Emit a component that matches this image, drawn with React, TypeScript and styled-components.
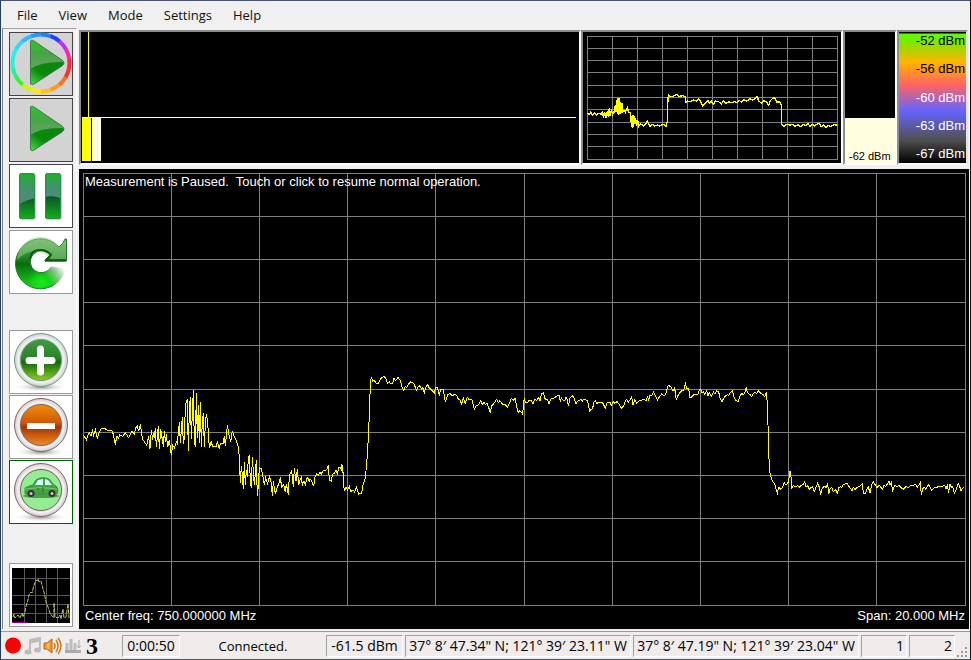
import React from "react";
import styled, { createGlobalStyle, css } from "styled-components";

const GlobalStyle = createGlobalStyle`
  * { box-sizing: border-box; }
  body {
    margin: 0;
    background: #f0f0f0;
    color: #000;
    font-family: "Open Sans", "Noto Sans", sans-serif;
    font-size: 13px;
  }
`;

const sunken = css`
  border: 2px solid;
  border-color: #8c8c8c #fff #fff #8c8c8c;
`;

const Window = styled.div`
  display: flex;
  flex-direction: column;
  height: 100vh;
  min-height: 660px;
  border: 1px solid #1f3d5c;
  border-top-color: #4a546e;
  border-right-color: #111;
  border-bottom-color: #4c5568;
  background: #f0f0f0;
`;

const MenuBar = styled.nav`
  display: flex;
  flex: none;
  height: 27px;
  padding-left: 6px;
`;

const MenuItem = styled.button`
  border: 0;
  padding: 0 11px 0 10px;
  background: none;
  font: inherit;
  color: #111;
`;

const Workspace = styled.div`
  display: flex;
  flex: 1;
  gap: 2px;
  min-height: 0;
  padding-left: 1px;
`;

const Sidebar = styled.aside`
  display: flex;
  flex: none;
  flex-direction: column;
  width: 75px;
  padding: 3px 0 0 6px;
  border-top: 1px solid #a0a0a0;
  border-left: 1px solid #808080;
  border-right: 1px solid #fff;
`;

const ToolGroup = styled.div<{ $gap: number; $top?: number }>`
  display: flex;
  flex-direction: column;
  gap: ${(p) => p.$gap}px;
  margin-top: ${(p) => p.$top ?? 0}px;
`;

const ToolButton = styled.button<{ $edge?: string; $active?: boolean }>`
  display: block;
  width: 64px;
  height: 64px;
  padding: 0;
  border: 1px solid ${(p) => p.$edge ?? "#999"};
  background: ${(p) => (p.$active ? "#d3d3d3" : "#fff")};
  svg { display: block; overflow: visible; }
`;

const Content = styled.main`
  display: flex;
  flex: 1;
  min-width: 0;
  flex-direction: column;
  gap: 4px;
  padding: 2px 1px 0 0;
`;

const Meters = styled.div`
  display: grid;
  flex: none;
  grid-template-columns: minmax(0, 1fr) 262px 54px 71px;
  grid-template-rows: 135px;
  padding-right: 1px;
`;

const Overview = styled.div`
  ${sunken}
  display: flex;
  flex-direction: column;
  padding: 0 3px 2px 1px;
  background: #000;
`;

const OverviewTop = styled.div`
  height: 85px;
  padding-left: 6px;
`;

const Needle = styled.div`
  width: 1px;
  height: 100%;
  background: #ff0;
`;

const OverviewBars = styled.div`
  display: flex;
  flex: 1;
  gap: 1px;
  border-top: 1px solid #ffffe8;
`;

const LevelBar = styled.div<{ $color: string }>`
  width: 9px;
  background: ${(p) => p.$color};
`;

const MiniPlot = styled.div`
  ${sunken}
  padding: 4px 3px 3px 4px;
  background: #000;
  svg { display: block; width: 100%; height: 124px; }
`;

const Meter = styled.div`
  ${sunken}
  display: flex;
  flex-direction: column;
  justify-content: flex-end;
  background: #000;
`;

const MeterFill = styled.div`
  display: flex;
  align-items: flex-end;
  height: 45px;
  padding-left: 4px;
  background: #ffffe0;
  font: 11px/14px "Liberation Sans", Arial, sans-serif;
  white-space: nowrap;
`;

const Scale = styled.div`
  ${sunken}
  display: flex;
  flex-direction: column;
  justify-content: space-between;
  padding-right: 1px;
  border-right-color: #e3e3e3;
  background: linear-gradient(#000 1px, #5f0 2px, #8ce000 12px, #ffb400 30px, #ff6464 53px, #6464ff 79px, #505050 108px, #000 131px);
  font: 13px/18px "Liberation Sans", Arial, sans-serif;
  text-align: right;
`;

const ScaleLabel = styled.span<{ $light: boolean }>`
  color: ${(p) => (p.$light ? "#fff" : "#000")};
`;

const Spectrum = styled.section`
  position: relative;
  display: flex;
  flex: 1;
  min-height: 0;
  flex-direction: column;
  padding: 4px 3px 2px 4px;
  background: #000;
  color: #fff;
  font: 13px/16px "Liberation Sans", Arial, sans-serif;
`;

const PlotArea = styled.div`
  flex: 1;
  min-height: 0;
  svg { display: block; width: 100%; height: 100%; }
`;

const Message = styled.p`
  position: absolute;
  top: 5px;
  left: 6px;
  margin: 0;
  white-space: pre;
`;

const PlotFooter = styled.div`
  display: flex;
  flex: none;
  justify-content: space-between;
  height: 21px;
  padding: 2px 1px 0 2px;
`;

const StatusBar = styled.footer`
  display: flex;
  flex: none;
  align-items: center;
  gap: 2px;
  height: 28px;
  margin-top: 2px;
  padding: 0 3px;
  border-top: 1px solid #999;
  background: #f0eceb;
  line-height: 20px;
  white-space: nowrap;
`;

const StatusIcons = styled.div`
  display: flex;
  flex: none;
  align-items: center;
  gap: 2px;
  width: 116px;
`;

const Channel = styled.strong`
  margin-left: 3px;
  font: bold 24px/24px "Liberation Serif", serif;
`;

const Cell = styled.span<{ $width: number; $align?: string }>`
  flex: none;
  width: ${(p) => p.$width}px;
  height: 22px;
  padding: 0 2px;
  border: 1px solid;
  border-color: #a0a0a0 #fff #fff #a0a0a0;
  font-size: 14px;
  text-align: ${(p) => p.$align ?? "center"};
`;

const Connection = styled.span`
  flex: 1;
  min-width: 70px;
  text-align: center;
`;

const Grip = styled.svg`
  flex: none;
  align-self: flex-end;
`;

type Section = { dx: number; dy: number; points: string };

const SWEEP: Section[] = [
  { dx: -9, dy: 591, points: "10,196 15,202 19,210 24,196 28,188 33,197 37,181 41,196 46,179 52,205 58,187 62,177 75,176 82,181 95,181 100,193 106,225 110,199 116,204 119,194 128,200 136,188 146,203 155,184 163,192 168,172 172,168 176,184 181,163 187,206 193,215 200,226 206,199 210,236 214,181 218,210 220,190 223,205 226,175 229,232 232,200 235,167 238,238 242,178 247,208 250,230 253,184 256,215 259,193 263,232 268,210 274,256 278,226 283,233 289,215 292,220 295,188 298,157 301,218 304,180 307,142 310,223 313,206 316,112 319,95 322,90 325,244 328,118 331,80 334,206 337,130 340,61 343,218 346,230 349,70 352,205 355,104 358,220 361,97 364,230 367,154 370,130 373,230 376,160 379,132 382,148 385,185 388,235 394,214 397,228 409,230 412,214 418,238 421,220 430,220 433,199 436,228 439,197 442,166 446,190 452,217 457,184 463,202 469,211 475,232 478,262 481,338 484,287 487,316 490,358 493,277 496,345 499,299 502,320 505,262 508,259 511,331 514,355 517,262 520,305 523,345 526,310 529,271 532,379 535,345 538,292 544,296 548,315 553,345 557,324 563,342 568,319 573,335 577,377 580,334 586,372 592,350 596,344 601,322 605,352 611,343 616,367 619,341 625,374 628,318 631,310 635,302 640,352 643,295 648,333 652,297 656,345 660,330 664,322 667,345 672,333 676,345 682,322 688,333" },
  { dx: 681, dy: 561, points: "0,358 5,362 11,379 15,350 20,340 25,347 30,336 34,342 38,333 46,332 52,325 55,314 58,360 64,363 68,342 74,340 78,329 82,342 87,322 91,325 94,318 96,333 98,316 101,377 104,394 108,382 112,390 118,380 122,394 130,391 134,397 139,382 146,402 155,400 160,370 165,358 168,332 172,285 176,215 179,135 181,70 184,50 188,64 192,60 198,69 205,70 213,55 222,48 227,55 233,70 238,65 242,71 248,70 252,55 257,62 264,53 270,60 276,80 281,91 286,80 290,82 295,73 302,66 312,71 319,91 325,80 330,77 335,87 338,82 343,99 348,80 352,73 358,84 364,90 373,99 376,84 382,82 388,104 393,87 399,88 403,105 406,126 413,104 420,100 427,107 434,103 440,106 445,118 450,120 455,132 460,114 466,130 472,112 477,118 486,120 493,149 498,138 505,135 512,121 516,133 522,128 526,133 531,130 536,142 541,158 545,137 552,130 560,118 565,128 570,122 577,132 585,134 592,141 598,130 604,115 610,122 615,114 620,140 624,157 630,152 638,162 641,126 643,114 646,128 652,128 657,121 664,122 669,133 674,118 680,122 686,112" },
  { dx: 1371, dy: 591, points: "0,94 4,72 10,68 14,84 18,88 23,90 27,102 32,87 38,86 48,80 53,77 57,75 61,96 64,84 69,90 75,90 78,80 82,88 85,108 90,84 97,76 102,84 108,102 113,93 118,92 123,88 127,94 131,88 142,91 145,104 149,124 153,118 158,116 161,97 166,92 171,103 175,96 181,99 186,96 191,104 196,115 202,97 210,96 214,106 220,96 224,100 231,95 238,103 244,115 252,106 256,92 260,88 265,96 270,90 275,80 279,105 284,90 290,99 298,93 306,90 313,88 318,92 323,80 326,89 330,76 335,78 341,66 347,78 353,90 359,79 365,72 372,78 377,74 382,52 386,46 394,52 399,62 404,54 409,90 413,78 420,68 426,62 431,60 436,41 440,56 446,56 450,84 455,81 462,74 470,73 475,72 478,60 482,58 486,68 490,66 494,74 500,62 504,78 508,68 514,80 520,66 525,72 530,62 536,66 540,84 546,96 550,86 556,78 562,74 567,76 571,68 577,62 582,80 588,92 594,95 600,78 606,70 610,74 614,70 619,50 622,68 630,74 635,80 640,70 645,66 650,70 655,62 660,68 666,72 670,74 674,80 679,66 682,100 684,165 686,250 690,310" },
  { dx: 2001, dy: 591, points: "64,325 68,335 74,342 78,358 82,370 86,352 92,357 98,352 102,338 108,345 114,338 118,320 120,302 123,320 124,358 130,346 136,350 142,347 148,352 154,346 160,343 164,335 168,350 173,347 178,358 184,352 188,350 193,364 198,352 203,340 208,352 212,374 217,352 224,350 229,352 233,338 236,373 240,358 245,352 250,365 256,358 262,369 267,352 271,350 275,353 280,343 292,341 297,350 302,356 306,364 310,352 315,358 322,352 330,348 337,341 340,370 346,371 351,356 355,352 360,368 365,343 370,335 376,345 381,352 388,346 393,353 398,357 402,344 406,350 411,344 417,334 420,346 424,338 428,362 434,346 440,350 447,347 454,354 460,358 468,350 475,352 482,346 490,347 496,343 502,352 508,343 511,337 514,376 518,356 523,352 528,358 535,343 540,352 545,362 551,354 560,352 568,349 576,350 584,346 588,356 592,346 596,368 600,342 604,352 608,350 613,370 619,357 624,341 628,346 633,362 640,352" },
];

const MINI_SWEEP: Section[] = [
  { dx: -51, dy: -33, points: "52,265 58,268 62,262 68,270 74,264 80,270 86,265 94,268 98,258 100,278 104,262 108,278 112,258 115,275 118,248 120,274 124,256 128,268 132,262 136,240 138,262 140,225 142,268 144,220 146,270 148,218 150,266 152,230 154,264 156,235 158,260 162,255 166,262 172,248 176,262 182,262 184,300 187,305 189,270 191,305 193,272 195,298 197,280 200,302 203,285 206,304 212,296 220,303 228,296 232,288 236,298 240,305 246,298 254,303 262,300 270,303 280,298 288,304 292,290 293,240 295,210 300,215 308,214 320,209 328,215 338,211 346,216 347,232 352,228 360,230 370,225 380,228 386,222 392,230 398,243 406,234 414,226 418,234 424,229 430,238 436,228 446,230 454,237 460,228 468,236 476,230 484,233 492,230 500,232 508,226 514,232 522,224 530,228 540,221 548,225 556,220 562,215 566,228 574,234 582,227 588,230 596,240 602,226 608,220 614,218 620,232 628,230 634,240 635,298 642,305 650,298 660,300 668,298 676,304 684,298 692,305 700,298 706,302 714,296 720,304 728,298 734,303 740,298 748,295 754,305 760,300 768,308 774,300 782,305 792,299 800,300" },
];

const toPolyline = (sections: Section[]) =>
  sections
    .flatMap(({ dx, dy, points }) =>
      points.split(" ").map((pair) => {
        const [x, y] = pair.split(",").map(Number);
        return `${x + dx},${y + dy}`;
      })
    )
    .join(" ");

/* Plot units are thirds of a pixel; lines run through pixel centres. */
function Plot({ cols, rows, sweep, label, weight = 3 }: { cols: number; rows: number; sweep: Section[]; label: string; weight?: number }) {
  const lines = Array.from({ length: 11 }, (_, i) => i);
  const at = (i: number, count: number) => Math.floor(((count - 1) * i) / 10) * 3 + 1.5;
  const w = cols * 3;
  const h = rows * 3;
  return (
    <svg viewBox={`0 0 ${w} ${h}`} preserveAspectRatio="none" role="img" aria-label={label} fill="none" shapeRendering="crispEdges">
      <g stroke="#808080" strokeWidth="3">
        {lines.map((i) => (
          <path key={i} d={`M${at(i, cols)} 0V${h}M0 ${at(i, rows)}H${w}`} />
        ))}
      </g>
      <polyline points={toPolyline(sweep)} stroke="#ff0" strokeWidth={weight} />
    </svg>
  );
}

const RING = ["#ff2846", "#ff3030", "#ff7020", "#ff9820", "#ffc018", "#ffe810", "#d8f014", "#40f030", "#28f0a0", "#28f0d8", "#28f0f0", "#30d8ff", "#30b8ff", "#2898ff", "#2080ff", "#2040ff", "#c030f0", "#f828b0"];

function PlayIcon({ ring }: { ring?: boolean }) {
  const id = ring ? "sweep" : "play";
  const point = (deg: number) => {
    const a = (deg * Math.PI) / 180;
    return `${31 + 28.5 * Math.cos(a)} ${31 + 28.5 * Math.sin(a)}`;
  };
  return (
    <svg width="62" height="62" viewBox="0 1 62 62" aria-hidden="true">
      <defs>
        <linearGradient id={`${id}-a`} x2="0" y2="1">
          <stop stopColor="#26d321" /><stop offset=".3" stopColor="#45a742" /><stop offset=".55" stopColor="#5da35c" /><stop offset="1" stopColor="#3ba83a" />
        </linearGradient>
        <linearGradient id={`${id}-b`} x1="1" y1="0" x2="0" y2="1">
          <stop stopColor="#118411" /><stop offset=".55" stopColor="#08890a" /><stop offset="1" stopColor="#55ed4d" />
        </linearGradient>
        <clipPath id={`${id}-c`}><path d="M20 10Q20 7 24 9L52 28Q56 31 52 34L24 52Q20 54 20 50Z" /></clipPath>
      </defs>
      {ring && RING.map((color, i) => (
        <path key={color} d={`M${point(i * 20 - 10)}A28.5 28.5 0 0 1 ${point(i * 20 + 11)}`} fill="none" stroke={color} strokeWidth="4" />
      ))}
      <g clipPath={`url(#${id}-c)`}>
        <path d="M18 5H58V56H18Z" fill={`url(#${id}-a)`} />
        <path d="M19 38Q30 29 55 30L52 35L22 55H19Z" fill={`url(#${id}-b)`} />
      </g>
      <path d="M20.5 10Q20.5 7 24 9L52 28Q56 31 52 34L24 52Q20.5 54 20.5 50Z" fill="none" stroke="#3d7a52" strokeWidth="1" />
    </svg>
  );
}

function PauseIcon() {
  return (
    <svg width="62" height="62" viewBox="1 1 62 62" aria-hidden="true">
      <defs>
        <linearGradient id="pause-a" x2="0" y2="1">
          <stop stopColor="#16b51b" /><stop offset=".28" stopColor="#409568" /><stop offset=".55" stopColor="#528979" /><stop offset="1" stopColor="#278f34" />
        </linearGradient>
        <linearGradient id="pause-b" x2="0" y2="1">
          <stop stopColor="#07542b" /><stop offset="1" stopColor="#15af17" />
        </linearGradient>
        <clipPath id="pause-c"><rect x="10" y="9" width="16" height="46" rx="3" /><rect x="36" y="9" width="16" height="46" rx="3" /></clipPath>
      </defs>
      <rect x="11" y="10" width="16" height="46" rx="3" fill="#ccc" /><rect x="37" y="10" width="16" height="46" rx="3" fill="#ccc" />
      <g clipPath="url(#pause-c)">
        <path d="M8 8H54V56H8Z" fill="url(#pause-a)" />
        <path d="M8 41Q17 36 26 34V55H8ZM36 33Q44 31 54 35V55H36Z" fill="url(#pause-b)" />
      </g>
      <g fill="none" stroke="#259445"><rect x="10.5" y="9.5" width="15" height="45" rx="2" /><rect x="36.5" y="9.5" width="15" height="45" rx="2" /></g>
    </svg>
  );
}

function RefreshIcon() {
  return (
    <svg width="62" height="62" viewBox="1 1 62 62" aria-hidden="true">
      <defs>
        <linearGradient id="turn-a" x2="0" y2="1">
          <stop stopColor="#62b55f" /><stop offset=".35" stopColor="#2b872b" /><stop offset=".5" stopColor="#086d0a" /><stop offset="1" stopColor="#19d81b" />
        </linearGradient>
        <linearGradient id="turn-b" x1="38" y1="48" x2="55" y2="35" gradientUnits="userSpaceOnUse">
          <stop stopColor="#fff" stopOpacity="0" /><stop offset=".9" stopColor="#fff" />
        </linearGradient>
        <radialGradient id="turn-c" cx="33" cy="52" r="15" gradientUnits="userSpaceOnUse">
          <stop stopColor="#14ef16" /><stop offset="1" stopColor="#14ef16" stopOpacity="0" />
        </radialGradient>
      </defs>
      <path d="M50 17Q54 14 56 9H57.500V31H36L41 25A11 11 0 1 0 42 37L56 39A25 25 0 1 1 50 17Z" fill="url(#turn-a)" stroke="#1b792b" />
      <path d="M32 7Q43 7 50 17Q54 14 57 9V29H42Q25 13 8 30Q10 8 32 7Z" fill="#9bd28e" opacity=".5" />
      <path d="M37 30.500H57M36 31L42 25Q38 20 31 20Q22 20 21 29" fill="none" stroke="#075c0c" strokeWidth="2" />
      <path d="M8 32Q8 57 32 57.500Q45 56 52 46L40 39Q37 43 32 43Q22 43 21 32Q15 30 8 32Z" fill="url(#turn-c)" />
      <path d="M41 35H58V41Q54 53 41 58L35 43Q40 41 41 35Z" fill="url(#turn-b)" />
    </svg>
  );
}

function Badge({ id, rim, shades, children }: { id: string; rim: string; shades: string[]; children: React.ReactNode }) {
  return (
    <svg width="62" height="62" viewBox="0 1 62 62" aria-hidden="true">
      <defs>
        <radialGradient id={`${id}-r`}><stop offset=".72" stopColor="#aaa" /><stop offset=".84" stopColor="#f4f4f4" /><stop offset="1" stopColor="#ccc" /></radialGradient>
        <radialGradient id={`${id}-s`}><stop stopColor="#888" /><stop offset="1" stopColor="#fff" stopOpacity="0" /></radialGradient>
        <linearGradient id={`${id}-f`} x2="0" y2="1">
          <stop stopColor={shades[0]} /><stop offset=".45" stopColor={shades[1]} /><stop offset=".55" stopColor={shades[2]} /><stop offset="1" stopColor={shades[3]} />
        </linearGradient>
      </defs>
      <ellipse cx="31" cy="57" rx="27" ry="5" fill={`url(#${id}-s)`} />
      <circle cx="31" cy="30" r="26.500" fill={`url(#${id}-r)`} stroke={rim} />
      <circle cx="31" cy="30" r="20.500" fill={`url(#${id}-f)`} stroke={rim} />
      {children}
    </svg>
  );
}

function CarDrawing() {
  return (
    <g>
      <ellipse cx="31" cy="36" rx="18" ry="2" fill="#4b9b48" />
      <path d="M15 28Q18 26 23 25L26 20Q32 16 39 19L44 25Q48 26 48 31L47 34H15Z" fill="#45a342" stroke="#3a8f38" />
      <path d="M25 25L28 20L33 19V25Z M35 19L38 20L42 25H35Z" fill="#d4fcff" />
      <path d="M15 29Q31 26 47 29" fill="none" stroke="#72c96b" />
      <path d="M33 27V33M27 29H29" stroke="#207421" />
      {[21, 42].map((x) => (
        <g key={x}><circle cx={x} cy="33.500" r="3.500" fill="#363039" /><circle cx={x} cy="33.500" r="1.500" fill="#d6bfd2" /></g>
      ))}
    </g>
  );
}

function SpectrumIcon() {
  return (
    <svg width="62" height="62" viewBox="0 0 62 62" aria-hidden="true">
      <path d="M2 4H60V59H2Z" fill="#000" />
      <path d="M14.500 4V59M25.500 4V59M36.500 4V59M47.500 4V59M2 14.500H60M2 31.500H60M2 40.500H60M2 49.500H60" stroke="#585858" />
      <path d="M3 53L4 50L5 54L8 51L10 54L12 49L13 53L15 48L16 42L18 36L19 31L21 28L22 29L24 21L26 16L27 17L28 15L29 18L31 17L33 25L34 28L36 38L38 43L40 49L42 52L44 54V39L45 53L48 54L50 51L51 55L53 45L54 54L56 53L58 40L59 54" fill="none" stroke="#c4c46a" strokeDasharray="4 1" />
      <path d="M2 58.500H18" stroke="#a0008c" />
    </svg>
  );
}

const LEVELS = ["-52 dBm", "-56 dBm", "-60 dBm", "-63 dBm", "-67 dBm"];
const MENUS = ["File", "View", "Mode", "Settings", "Help"];

export default function App() {
  return (
    <Window>
      <GlobalStyle />
      <MenuBar aria-label="Main menu">
        {MENUS.map((name) => <MenuItem key={name}>{name}</MenuItem>)}
      </MenuBar>
      <Workspace>
        <Sidebar>
          <ToolGroup $gap={2}>
            <ToolButton aria-label="Color sweep" $edge="#444" $active><PlayIcon ring /></ToolButton>
            <ToolButton aria-label="Play" $edge="#444" $active><PlayIcon /></ToolButton>
            <ToolButton aria-label="Pause" $edge="#444"><PauseIcon /></ToolButton>
            <ToolButton aria-label="Restart"><RefreshIcon /></ToolButton>
          </ToolGroup>
          <ToolGroup $gap={1} $top={36}>
            <ToolButton aria-label="Zoom in">
              <Badge id="plus" rim="#69a27b" shades={["#3e9b3c", "#2a8228", "#12690f", "#8ccc22"]}>
                <path d="M30.500 19V42M19 30.500H42" stroke="#fff" strokeWidth="7" strokeLinecap="round" />
              </Badge>
            </ToolButton>
            <ToolButton aria-label="Zoom out">
              <Badge id="minus" rim="#8d6262" shades={["#ef9005", "#cf5607", "#a73300", "#f38c23"]}>
                <path d="M20 31H42" stroke="#fff" strokeWidth="6" strokeLinecap="square" />
              </Badge>
            </ToolButton>
            <ToolButton aria-label="Drive mode" $edge="#006000">
              <Badge id="car" rim="#8a6262" shades={["#92ed93", "#92ed93", "#92ed93", "#92ed93"]}><CarDrawing /></Badge>
            </ToolButton>
          </ToolGroup>
          <ToolGroup $gap={0} $top={39}>
            <ToolButton aria-label="Spectrum view"><SpectrumIcon /></ToolButton>
          </ToolGroup>
        </Sidebar>
        <Content>
          <Meters>
            <Overview>
              <OverviewTop><Needle /></OverviewTop>
              <OverviewBars>
                <LevelBar $color="#ff0" />
                <LevelBar $color="#ffffe0" />
              </OverviewBars>
            </Overview>
            <MiniPlot><Plot cols={251} rows={124} sweep={MINI_SWEEP} label="Full span overview" weight={4} /></MiniPlot>
            <Meter><MeterFill>-62 dBm</MeterFill></Meter>
            <Scale>
              {LEVELS.map((level, i) => <ScaleLabel key={level} $light={i > 1}>{level}</ScaleLabel>)}
            </Scale>
          </Meters>
          <Spectrum>
            <PlotArea><Plot cols={883} rows={433} sweep={SWEEP} label="Spectrum trace" /></PlotArea>
            <Message>{"Measurement is Paused.  Touch or click to resume normal operation."}</Message>
            <PlotFooter><span>Center freq: 750.000000 MHz</span><span>Span: 20.000 MHz</span></PlotFooter>
          </Spectrum>
        </Content>
      </Workspace>
      <StatusBar>
        <StatusIcons>
          <svg width="18" height="18" viewBox="0 0 18 18" role="img" aria-label="Recording"><circle cx="9" cy="8.500" r="8" fill="#f00" /></svg>
          <svg width="17" height="20" viewBox="0 0 17 20" role="img" aria-label="Music off">
            <path d="M6 15V4L16 2V13" fill="none" stroke="#bdbdbd" strokeWidth="2" /><path d="M6 6L16 4" stroke="#bdbdbd" strokeWidth="3" />
            <ellipse cx="4" cy="16" rx="3.500" ry="2.500" fill="#bbb" /><ellipse cx="13.500" cy="14" rx="3.500" ry="2.500" fill="#bbb" />
          </svg>
          <svg width="19" height="20" viewBox="0 0 19 20" role="img" aria-label="Sound on">
            <path d="M1 7H4L9 3V17L4 13H1Z" fill="#f39a2d" stroke="#b5640f" /><path d="M5 7V13" stroke="#ffe0a0" />
            <path d="M11 7Q13 10 11 13M13 4Q17 10 13 16M15 2Q21 10 15 18" fill="none" stroke="#c97b1c" strokeWidth="1.500" />
          </svg>
          <svg width="17" height="18" viewBox="0 0 17 18" role="img" aria-label="Levels">
            <path d="M3 6V13M7 2V13M11 6V13" stroke="#bdbdbd" strokeWidth="3" /><path d="M15 3V11M13 8.500L15 11L17 8.500" fill="none" stroke="#aaa" /><path d="M1 14.500H17" stroke="#aaa" strokeWidth="3" />
          </svg>
          <Channel>3</Channel>
        </StatusIcons>
        <Cell $width={58}>0:00:50</Cell>
        <Connection>Connected.</Connection>
        <Cell $width={77}>-61.5 dBm</Cell>
        <Cell $width={226}>37° 8′ 47.34" N; 121° 39′ 23.11" W</Cell>
        <Cell $width={226}>37° 8′ 47.19" N; 121° 39′ 23.04" W</Cell>
        <Cell $width={46} $align="right">1</Cell>
        <Cell $width={46} $align="right">2</Cell>
        <Grip width="10" height="12" viewBox="0 0 10 12" aria-hidden="true">
          <path d="M8 0h2v2h-2zM4 4h2v2h-2zM8 4h2v2h-2zM0 8h2v2h-2zM4 8h2v2h-2zM8 8h2v2h-2z" fill="#999" />
        </Grip>
      </StatusBar>
    </Window>
  );
}
